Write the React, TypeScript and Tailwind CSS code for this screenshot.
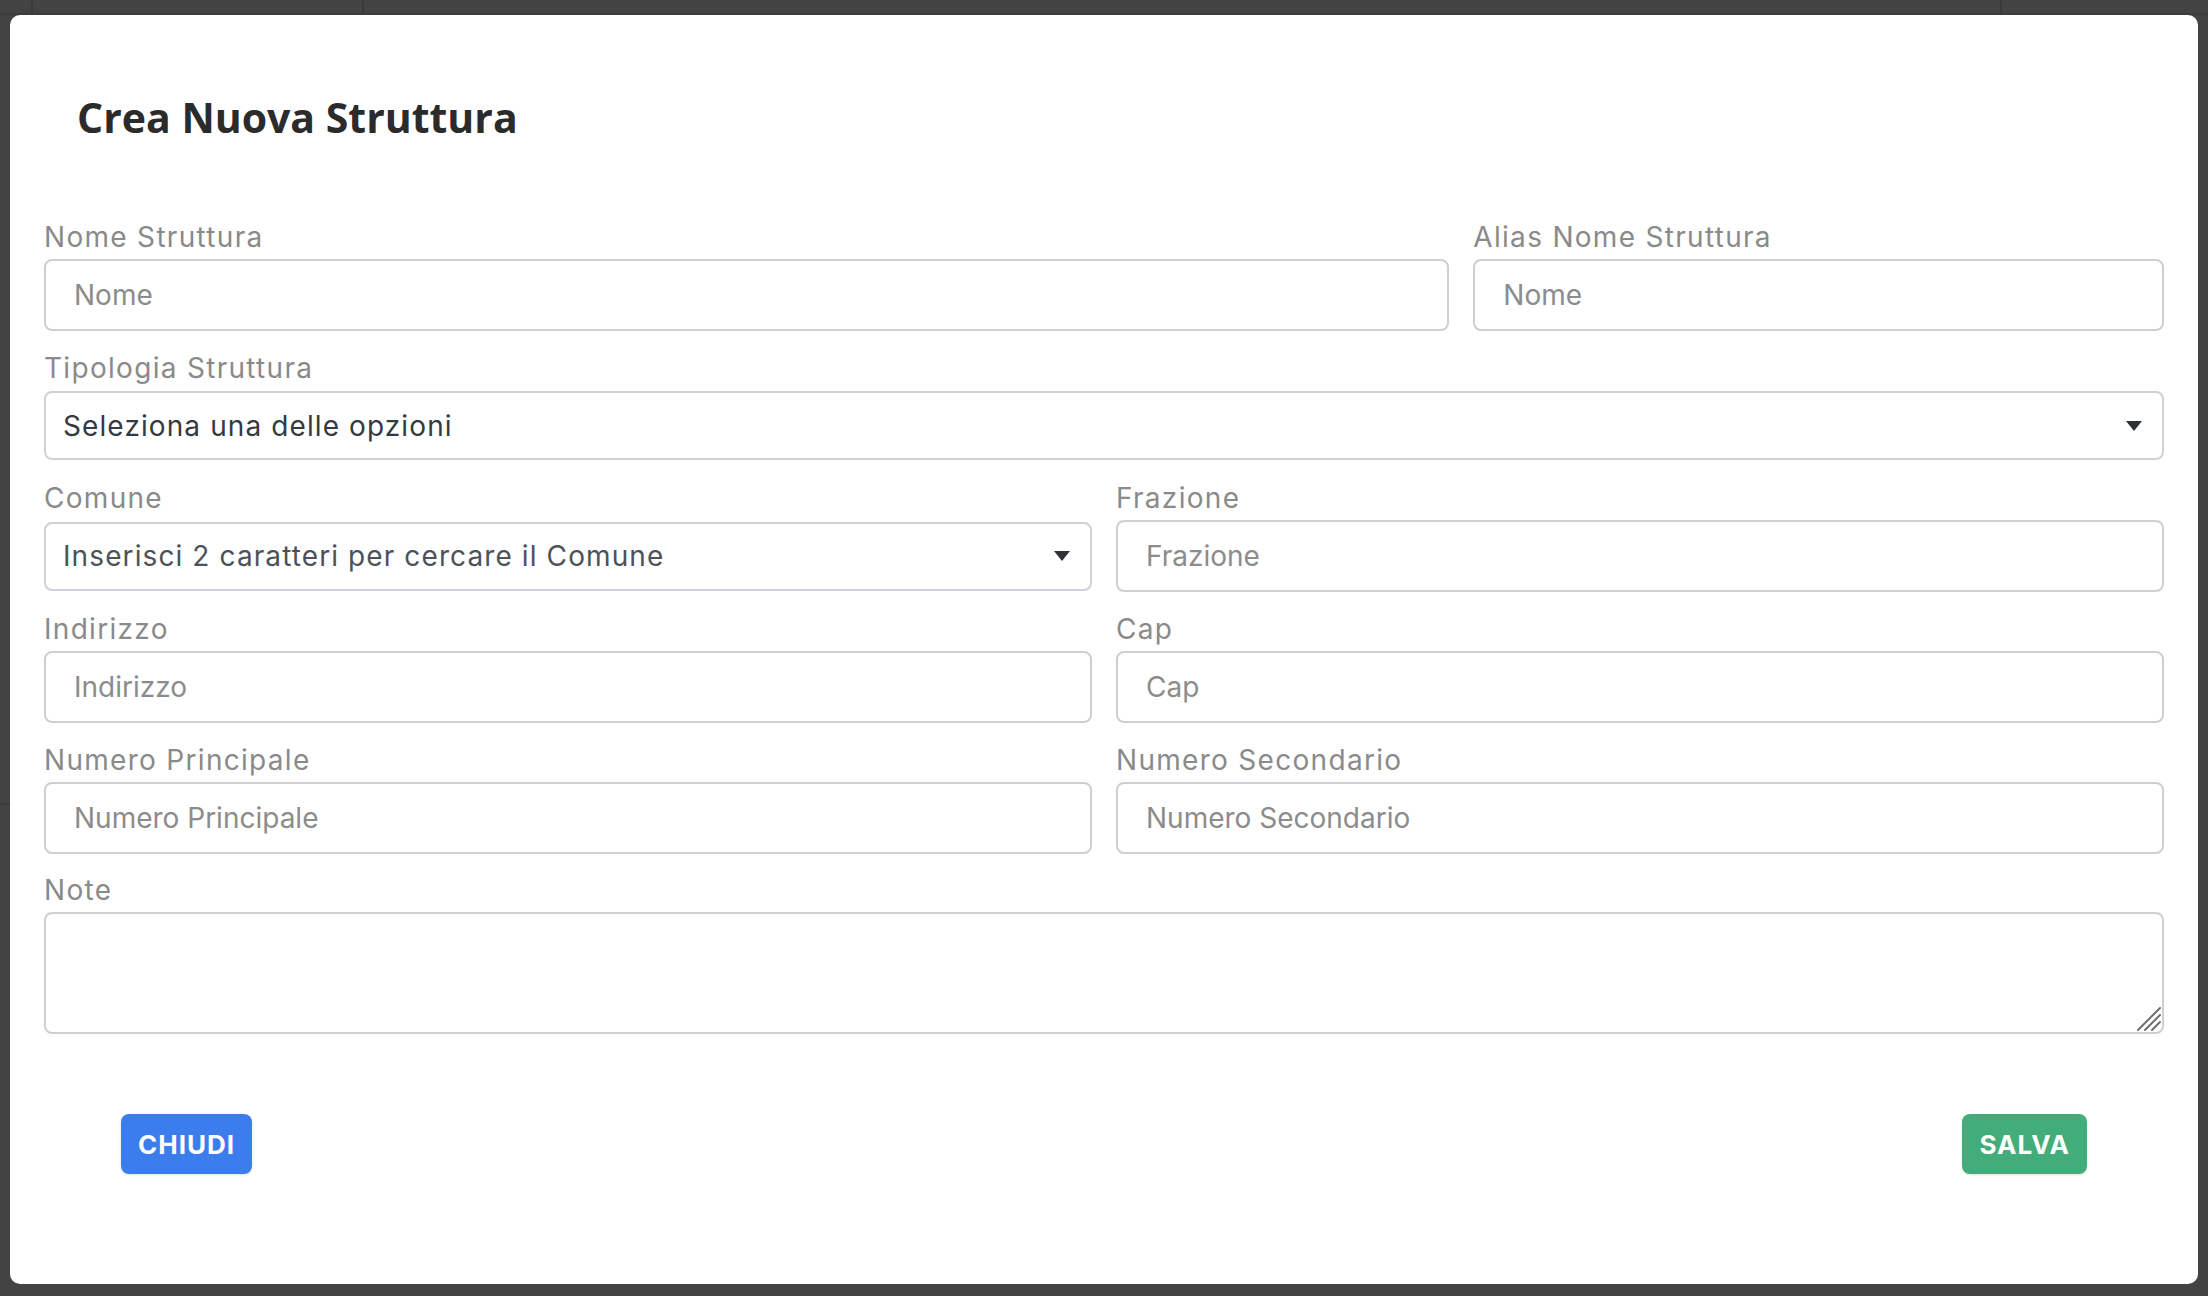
import React from "react";

const sans = { fontFamily: 'Inter, "Noto Sans", sans-serif' };

function Label({ children }: { children: React.ReactNode }) {
  return (
    <label
      className="block text-[28px] leading-[42px] mb-[1px] text-[#8a8a8a] tracking-[1.3px]"
      style={sans}
    >
      {children}
    </label>
  );
}

function TextInput({ placeholder }: { placeholder: string }) {
  return (
    <input
      type="text"
      placeholder={placeholder}
      className="block w-full h-[72px] border-2 border-[#cfcfcf] rounded-[8px] pl-[28px] pr-[16px] text-[28px] text-[#333] placeholder:text-[#8c8c8c] outline-none bg-white"
      style={sans}
    />
  );
}

function Select({ text, color }: { text: string; color: string }) {
  return (
    <div className="h-[72px] flex items-center">
      <div className="w-full h-[69px] border-2 border-[#cdd2d8] rounded-[8px] flex items-center justify-between pl-[17px] pr-[20px] bg-white">
        <span className={`text-[28px] tracking-[1.1px] ${color}`} style={sans}>
          {text}
        </span>
        <svg width="16" height="10" viewBox="0 0 16 10">
          <path d="M0 0 L16 0 L8 10 Z" fill="#2f3338" />
        </svg>
      </div>
    </div>
  );
}

export default function App() {
  return (
    <div className="relative w-full h-[1296px] bg-[#434343] pt-[15px] px-[10px] pb-[12px] overflow-hidden">
      <div className="absolute top-0 left-[31px] w-[2px] h-[15px] bg-[#3a3a3a]" />
      <div className="absolute top-0 left-[362px] w-[2px] h-[15px] bg-[#3a3a3a]" />
      <div className="absolute top-0 left-[2000px] w-[2px] h-[15px] bg-[#3a3a3a]" />
      <div className="absolute top-[13px] left-0 w-full h-[2px] bg-[#3c3c3c]" />
      <div className="absolute top-[803px] left-0 w-[10px] h-[2px] bg-[#3a3a3a]" />
      <div className="relative h-full bg-white rounded-[10px] px-[34px] pt-[82px]">
        <h2
          className="pl-[33px] text-[41px] leading-none font-bold text-[#2b2b2b]"
          style={{ fontFamily: '"Open Sans", sans-serif' }}
        >
          Crea Nuova Struttura
        </h2>
        <form className="mt-[78px] grid grid-cols-12 gap-x-[24px] gap-y-[15.7px]">
          <div className="col-span-8">
            <Label>Nome Struttura</Label>
            <TextInput placeholder="Nome" />
          </div>
          <div className="col-span-4">
            <Label>Alias Nome Struttura</Label>
            <TextInput placeholder="Nome" />
          </div>
          <div className="col-span-12">
            <Label>Tipologia Struttura</Label>
            <Select text="Seleziona una delle opzioni" color="text-[#343a40]" />
          </div>
          <div className="col-span-6">
            <Label>Comune</Label>
            <Select text="Inserisci 2 caratteri per cercare il Comune" color="text-[#4d5258]" />
          </div>
          <div className="col-span-6">
            <Label>Frazione</Label>
            <TextInput placeholder="Frazione" />
          </div>
          <div className="col-span-6">
            <Label>Indirizzo</Label>
            <TextInput placeholder="Indirizzo" />
          </div>
          <div className="col-span-6">
            <Label>Cap</Label>
            <TextInput placeholder="Cap" />
          </div>
          <div className="col-span-6">
            <Label>Numero Principale</Label>
            <TextInput placeholder="Numero Principale" />
          </div>
          <div className="col-span-6">
            <Label>Numero Secondario</Label>
            <TextInput placeholder="Numero Secondario" />
          </div>
          <div className="col-span-12">
            <Label>Note</Label>
            <div className="relative">
              <textarea
                className="block w-full h-[122px] border-2 border-[#cfcfcf] rounded-[8px] p-[16px] text-[28px] outline-none bg-white resize-none"
                style={sans}
              />
              <svg
                className="absolute right-[3px] bottom-[3px] pointer-events-none"
                width="24"
                height="24"
                viewBox="0 0 24 24"
              >
                <path
                  d="M1 23 L23 1 M8 23 L23 8 M15 23 L23 15"
                  stroke="#6e6e6e"
                  strokeWidth="2"
                  strokeLinecap="round"
                />
              </svg>
            </div>
          </div>
        </form>
        <div className="mt-[80px] px-[77px] flex justify-between">
          <button
            type="button"
            className="h-[60px] px-[17px] rounded-[8px] bg-[#3b7ded] text-white text-[26px] font-bold tracking-[1px] shadow-sm"
            style={sans}
          >
            CHIUDI
          </button>
          <button
            type="button"
            className="h-[60px] px-[17px] rounded-[8px] bg-[#42ad7a] text-white text-[26px] font-bold tracking-[1px] shadow-sm"
            style={sans}
          >
            SALVA
          </button>
        </div>
      </div>
    </div>
  );
}
